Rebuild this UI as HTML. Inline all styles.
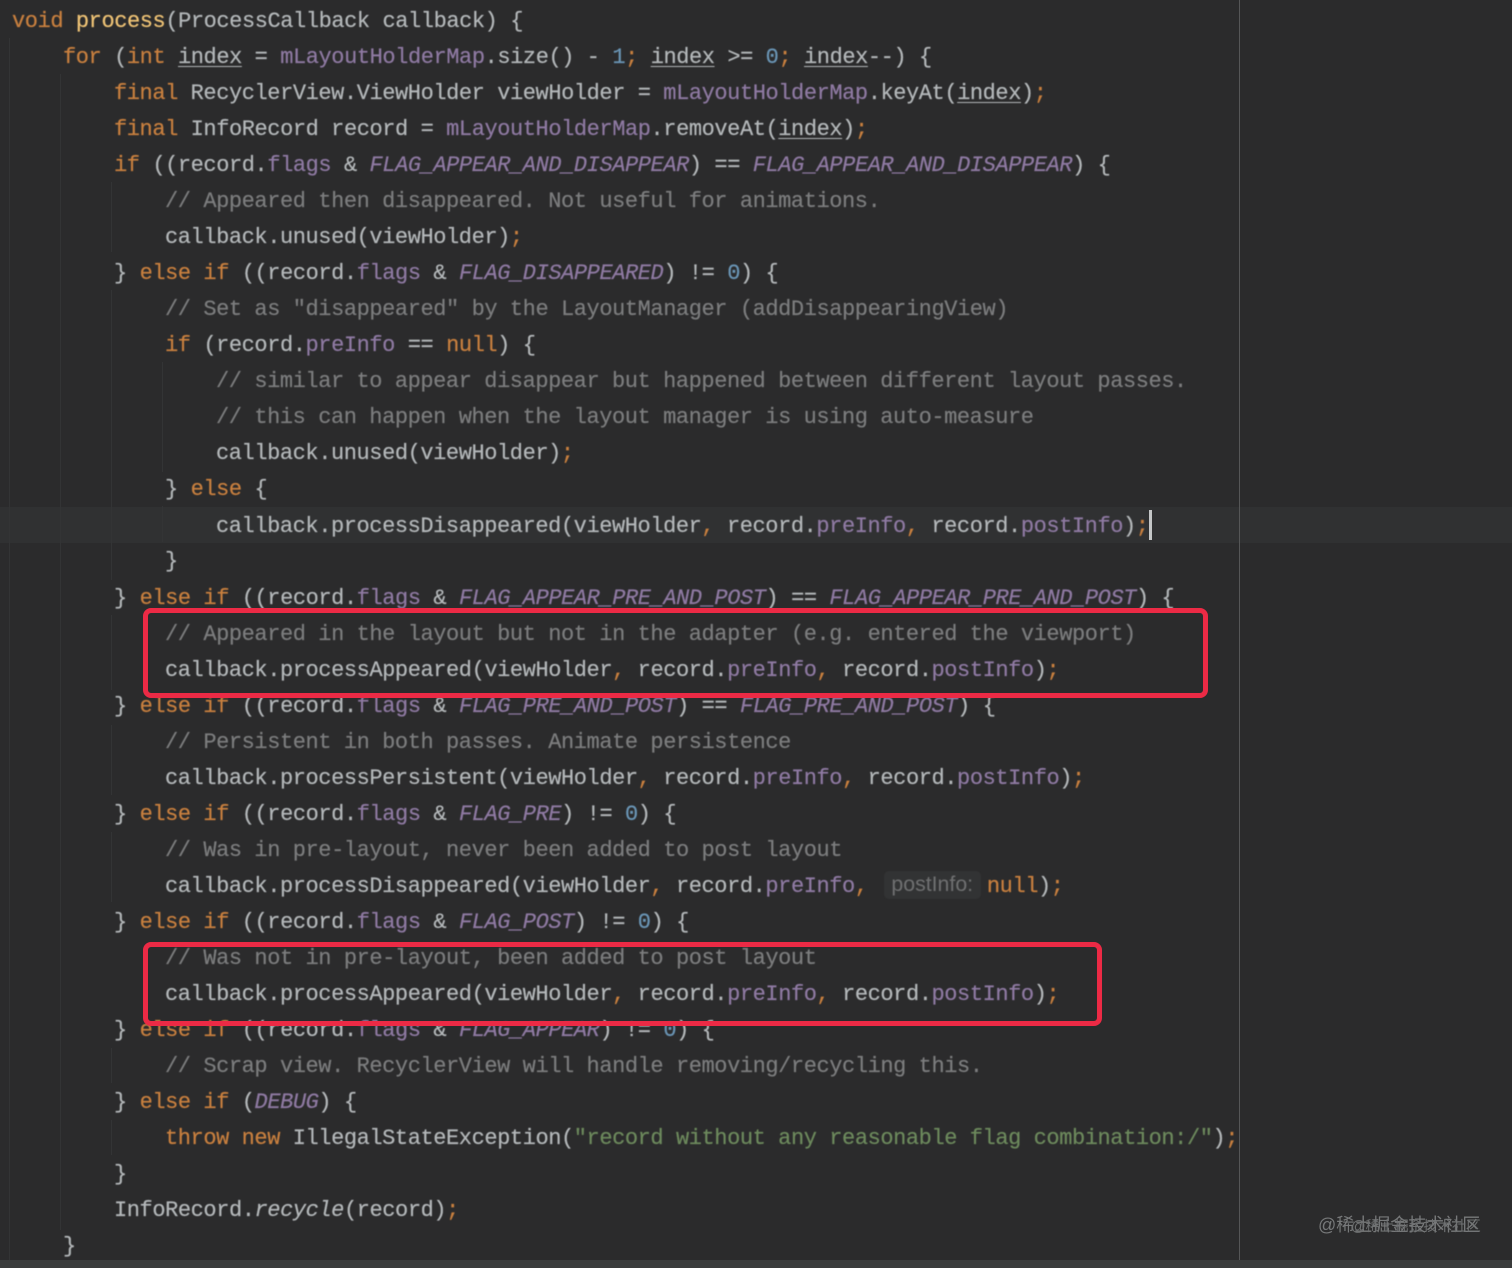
<!DOCTYPE html>
<html><head><meta charset="utf-8"><title>process</title>
<style>
html,body{margin:0;padding:0;background:#2b2b2c}
#r{position:relative;width:1512px;height:1268px;overflow:hidden;background:#2b2b2c}
#code{position:absolute;left:0;top:2px;width:1512px;height:1266px;filter:blur(.45px)}
.l{position:absolute;white-space:pre;height:36px;line-height:36px;font-family:"Liberation Mono",monospace;font-size:22px;letter-spacing:-.428px;color:#b4b8ba;-webkit-text-stroke:.2px currentColor}
.k{color:#c9803f}.f{color:#f0c476}.p{color:#8f7aa3}.i{color:#8f7aa3;font-style:italic}.e{font-style:italic}
.c{color:#7c7d7e}.n{color:#6a95b5}.s{color:#6d8a5d}.u{text-decoration:underline;text-underline-offset:3px;text-decoration-thickness:1px}
.h{display:inline-block;box-sizing:border-box;width:97px;height:28px;line-height:27px;margin:0 5.5px 0 4px;background:#323334;border-radius:5px;padding-left:7px;font:21.3px/27px "Liberation Sans",sans-serif;letter-spacing:0;color:#6f7071;vertical-align:1px;-webkit-text-stroke:0}
.g{position:absolute;width:1px;background:#333435}
.b{position:absolute;box-sizing:border-box;border:5px solid #ec2a45;border-radius:8px}
.w{position:absolute;white-space:nowrap;font-family:"Liberation Sans","Noto Sans CJK SC",sans-serif}
</style></head><body><div id="r">
<div style="position:absolute;left:0;top:507px;width:1512px;height:36px;background:#303132"></div>
<div style="position:absolute;left:0;top:1260px;width:1512px;height:8px;background:#3a3c3c"></div>
<div style="position:absolute;left:1239px;top:0;width:1px;height:1260px;background:#555657"></div>
<div class="g" style="left:9px;top:38px;height:1222px"></div>
<div class="g" style="left:60px;top:74px;height:1156px"></div>
<div class="g" style="left:111px;top:182px;height:70px"></div>
<div class="g" style="left:111px;top:290px;height:290px"></div>
<div class="g" style="left:111px;top:615px;height:75px"></div>
<div class="g" style="left:111px;top:725px;height:70px"></div>
<div class="g" style="left:111px;top:832px;height:70px"></div>
<div class="g" style="left:111px;top:1048px;height:35px"></div>
<div class="g" style="left:111px;top:1120px;height:35px"></div>
<div class="g" style="left:162px;top:362px;height:110px"></div>
<div class="g" style="left:162px;top:506px;height:36px"></div>
<div id="code">
<div class="l" style="left:12px;top:2px"><span class="k">void</span> <span class="f">process</span>(ProcessCallback callback) {</div>
<div class="l" style="left:63px;top:38px"><span class="k">for</span> (<span class="k">int</span> <span class="u">index</span> = <span class="p">mLayoutHolderMap</span>.size() - <span class="n">1</span><span class="k">;</span> <span class="u">index</span> &gt;= <span class="n">0</span><span class="k">;</span> <span class="u">index</span>--) {</div>
<div class="l" style="left:114px;top:74px"><span class="k">final</span> RecyclerView.ViewHolder viewHolder = <span class="p">mLayoutHolderMap</span>.keyAt(<span class="u">index</span>)<span class="k">;</span></div>
<div class="l" style="left:114px;top:110px"><span class="k">final</span> InfoRecord record = <span class="p">mLayoutHolderMap</span>.removeAt(<span class="u">index</span>)<span class="k">;</span></div>
<div class="l" style="left:114px;top:146px"><span class="k">if</span> ((record.<span class="p">flags</span> &amp; <span class="i">FLAG_APPEAR_AND_DISAPPEAR</span>) == <span class="i">FLAG_APPEAR_AND_DISAPPEAR</span>) {</div>
<div class="l c" style="left:165px;top:182px">// Appeared then disappeared. Not useful for animations.</div>
<div class="l" style="left:165px;top:218px">callback.unused(viewHolder)<span class="k">;</span></div>
<div class="l" style="left:114px;top:254px">} <span class="k">else if</span> ((record.<span class="p">flags</span> &amp; <span class="i">FLAG_DISAPPEARED</span>) != <span class="n">0</span>) {</div>
<div class="l c" style="left:165px;top:290px">// Set as "disappeared" by the LayoutManager (addDisappearingView)</div>
<div class="l" style="left:165px;top:326px"><span class="k">if</span> (record.<span class="p">preInfo</span> == <span class="k">null</span>) {</div>
<div class="l c" style="left:216px;top:362px">// similar to appear disappear but happened between different layout passes.</div>
<div class="l c" style="left:216px;top:398px">// this can happen when the layout manager is using auto-measure</div>
<div class="l" style="left:216px;top:434px">callback.unused(viewHolder)<span class="k">;</span></div>
<div class="l" style="left:165px;top:470px">} <span class="k">else</span> {</div>
<div class="l" style="left:216px;top:507px">callback.processDisappeared(viewHolder<span class="k">,</span> record.<span class="p">preInfo</span><span class="k">,</span> record.<span class="p">postInfo</span>)<span class="k">;</span></div>
<div class="l" style="left:165px;top:542px">}</div>
<div class="l" style="left:114px;top:579px">} <span class="k">else if</span> ((record.<span class="p">flags</span> &amp; <span class="i">FLAG_APPEAR_PRE_AND_POST</span>) == <span class="i">FLAG_APPEAR_PRE_AND_POST</span>) {</div>
<div class="l c" style="left:165px;top:615px">// Appeared in the layout but not in the adapter (e.g. entered the viewport)</div>
<div class="l" style="left:165px;top:651px">callback.processAppeared(viewHolder<span class="k">,</span> record.<span class="p">preInfo</span><span class="k">,</span> record.<span class="p">postInfo</span>)<span class="k">;</span></div>
<div class="l" style="left:114px;top:687px">} <span class="k">else if</span> ((record.<span class="p">flags</span> &amp; <span class="i">FLAG_PRE_AND_POST</span>) == <span class="i">FLAG_PRE_AND_POST</span>) {</div>
<div class="l c" style="left:165px;top:723px">// Persistent in both passes. Animate persistence</div>
<div class="l" style="left:165px;top:759px">callback.processPersistent(viewHolder<span class="k">,</span> record.<span class="p">preInfo</span><span class="k">,</span> record.<span class="p">postInfo</span>)<span class="k">;</span></div>
<div class="l" style="left:114px;top:795px">} <span class="k">else if</span> ((record.<span class="p">flags</span> &amp; <span class="i">FLAG_PRE</span>) != <span class="n">0</span>) {</div>
<div class="l c" style="left:165px;top:831px">// Was in pre-layout, never been added to post layout</div>
<div class="l" style="left:165px;top:867px">callback.processDisappeared(viewHolder<span class="k">,</span> record.<span class="p">preInfo</span><span class="k">,</span> <span class="h">postInfo:</span><span class="k">null</span>)<span class="k">;</span></div>
<div class="l" style="left:114px;top:903px">} <span class="k">else if</span> ((record.<span class="p">flags</span> &amp; <span class="i">FLAG_POST</span>) != <span class="n">0</span>) {</div>
<div class="l c" style="left:165px;top:939px">// Was not in pre-layout, been added to post layout</div>
<div class="l" style="left:165px;top:975px">callback.processAppeared(viewHolder<span class="k">,</span> record.<span class="p">preInfo</span><span class="k">,</span> record.<span class="p">postInfo</span>)<span class="k">;</span></div>
<div class="l" style="left:114px;top:1011px">} <span class="k">else if</span> ((record.<span class="p">flags</span> &amp; <span class="i">FLAG_APPEAR</span>) != <span class="n">0</span>) {</div>
<div class="l c" style="left:165px;top:1047px">// Scrap view. RecyclerView will handle removing/recycling this.</div>
<div class="l" style="left:114px;top:1083px">} <span class="k">else if</span> (<span class="i">DEBUG</span>) {</div>
<div class="l" style="left:165px;top:1119px"><span class="k">throw new</span> IllegalStateException(<span class="s">"record without any reasonable flag combination:/"</span>)<span class="k">;</span></div>
<div class="l" style="left:114px;top:1155px">}</div>
<div class="l" style="left:114px;top:1191px">InfoRecord.<span class="e">recycle</span>(record)<span class="k">;</span></div>
<div class="l" style="left:63px;top:1227px">}</div>
</div>
<div style="position:absolute;left:1149px;top:510px;width:3px;height:30px;background:#c4c6c7"></div>
<div class="b" style="left:143px;top:608px;width:1065px;height:90px"></div>
<div class="b" style="left:143px;top:942px;width:959px;height:84px"></div>
<div class="w" style="left:1318px;top:1214px;font-size:18px;line-height:22px;color:#77797a">@稀土掘金技术社区</div>
<div class="w" style="left:1351px;top:1217px;font-size:14.4px;line-height:20px;color:#6e7071">@稀土掘金技术社区</div>
</div></body></html>
